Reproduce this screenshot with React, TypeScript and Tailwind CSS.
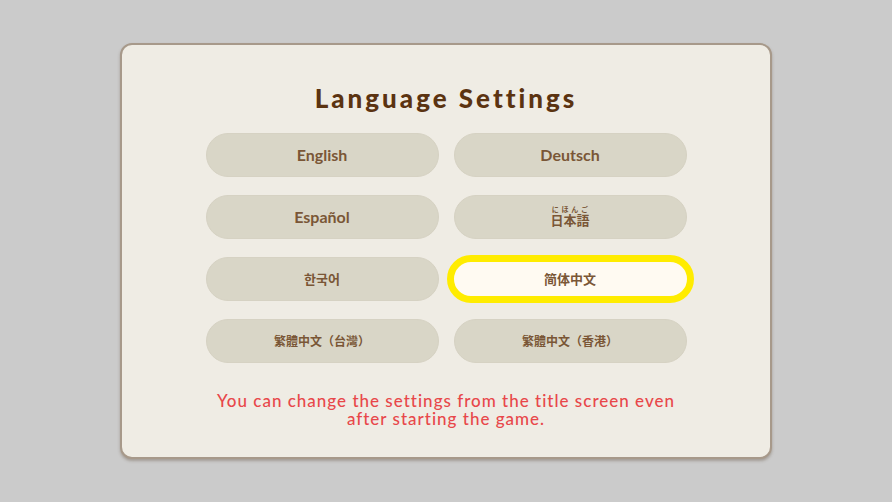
import React from "react";

const langs: { label: React.ReactNode; font: string; selected?: boolean }[] = [
  { label: "English", font: "latin" },
  { label: "Deutsch", font: "latin" },
  { label: "Español", font: "latin" },
  {
    label: (
      <ruby className="[ruby-position:over]">
        日本語
        <rt className="text-[7px] leading-[8px] font-bold">にほんご</rt>
      </ruby>
    ),
    font: "jp",
  },
  { label: "한국어", font: "kr" },
  { label: "简体中文", font: "sc", selected: true },
  { label: "繁體中文（台灣）", font: "tc" },
  { label: "繁體中文（香港）", font: "tc" },
];

const fontClass: Record<string, string> = {
  latin: "font-['Lato','Noto_Sans',sans-serif] text-[16px] font-bold",
  jp: "font-['Noto_Sans_CJK_JP',sans-serif] text-[13px] font-bold",
  kr: "font-['Noto_Sans_CJK_KR',sans-serif] text-[13px] font-bold",
  sc: "font-['Noto_Sans_CJK_SC',sans-serif] text-[13px] font-bold",
  tc: "font-['Noto_Sans_CJK_TC',sans-serif] text-[12px] font-bold",
};

export default function App() {
  return (
    <div className="w-[892px] h-[502px] bg-[#cbcbcb] flex items-center justify-center">
      <div className="w-[652px] h-[416px] rounded-[12px] bg-[#efece4] border-2 border-[#a7998a] shadow-[0_2px_3px_rgba(90,70,50,0.35)] flex flex-col items-center pt-[37px]">
        <h1 className="font-['Lato','Noto_Sans',sans-serif] font-black text-[26px] leading-[32px] tracking-[3px] text-[#5b3311]">
          Language Settings
        </h1>
        <div className="mt-[19px] grid grid-cols-[233px_233px] gap-x-[15px] gap-y-[18px]">
          {langs.map((l, i) =>
            l.selected ? (
              <div
                key={i}
                className={`-mx-[7px] -my-[2px] w-[247px] h-[48px] rounded-full border-[7px] border-[#ffec00] bg-[#fffaf2] flex items-center justify-center text-[#7a5636] ${fontClass[l.font]}`}
              >
                {l.label}
              </div>
            ) : (
              <div
                key={i}
                className={`w-[233px] h-[44px] rounded-full bg-[#d9d6c7] border border-[#d6d2c3] flex items-center justify-center text-[#7a5636] ${fontClass[l.font]}`}
              >
                {l.label}
              </div>
            )
          )}
        </div>
        <p className="mt-[29px] text-center font-['Lato','Liberation_Sans',sans-serif] font-medium text-[17px] leading-[18px] tracking-[1px] text-[#e8474a]">
          You can change the settings from the title screen even
          <br />
          after starting the game.
        </p>
      </div>
    </div>
  );
}
